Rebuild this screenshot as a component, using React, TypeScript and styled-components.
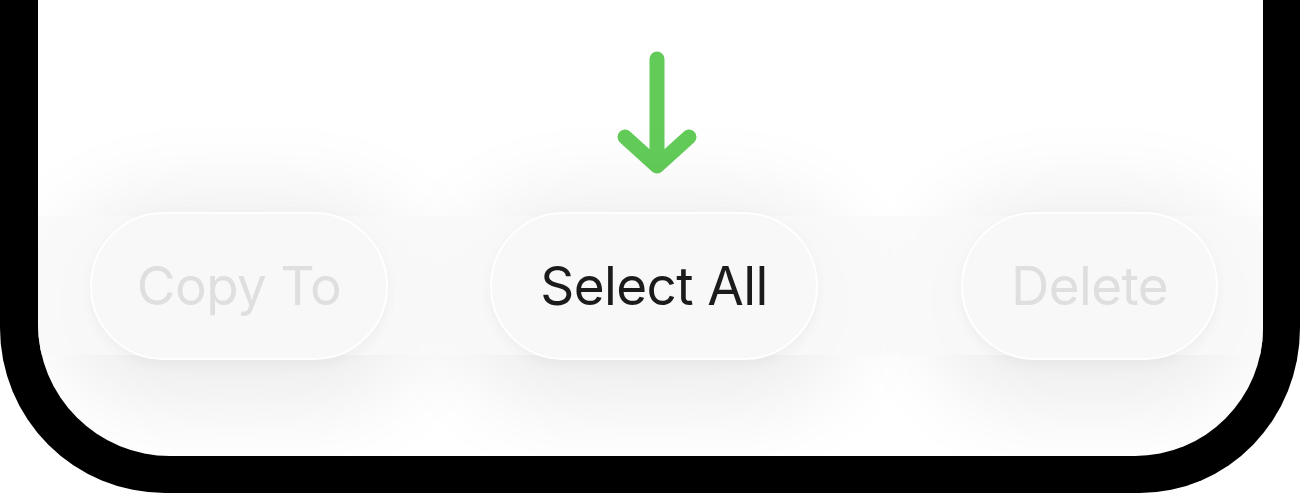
import React from "react";
import styled, { createGlobalStyle } from "styled-components";

const GlobalStyle = createGlobalStyle`
  html, body {
    margin: 0;
    padding: 0;
    background: #ffffff;
  }
  body {
    font-family: Inter, "Liberation Sans", Arial, sans-serif;
    -webkit-font-smoothing: antialiased;
  }
`;

const Device = styled.div`
  width: 1300px;
  height: 493px;
  box-sizing: border-box;
  padding: 0 37px 37px 38px;
  background: #000000;
  border-bottom-left-radius: 165px 165px;
  border-bottom-right-radius: 160px 165px;
  overflow: hidden;
`;

const Screen = styled.div`
  height: 456px;
  background: #ffffff;
  border-bottom-left-radius: 132px;
  border-bottom-right-radius: 128px;
  overflow: hidden;
  display: flex;
  flex-direction: column;
  padding-top: 50px;
  box-sizing: border-box;
`;

const ArrowWrap = styled.div`
  align-self: center;
  margin-left: 13px;
  width: 80px;
  height: 128px;
  color: #63cc59;
`;

const Toolbar = styled.div`
  position: relative;
  z-index: 0;
  display: flex;
  align-items: center;
  height: 148px;
  margin-top: 34px;
  padding-left: 52px;

  &::before {
    content: "";
    position: absolute;
    left: 0;
    right: 0;
    top: 4px;
    bottom: 5px;
    z-index: 1;
    background: rgba(249, 249, 249, 0.8);
  }
`;

const Slot = styled.div<{ $offset: number }>`
  position: relative;
  margin-left: ${({ $offset }) => $offset}px;
  height: 148px;
`;

const Glow = styled.div`
  position: absolute;
  left: 0;
  right: 0;
  top: 6px;
  bottom: 6px;
  z-index: 0;
  border-radius: 999px;
  box-shadow: 0 16px 90px 34px rgba(0, 0, 0, 0.08);
`;

const ActionButton = styled.button<{ $enabled?: boolean; $width: number }>`
  position: relative;
  z-index: 2;
  width: ${({ $width }) => $width}px;
  height: 148px;
  padding: 0;
  box-sizing: border-box;
  border: 2px solid #ffffff;
  border-radius: 74px;
  background: #f8f8f8;
  font-family: Inter, "Liberation Sans", Arial, sans-serif;
  font-size: 53px;
  font-weight: 400;
  letter-spacing: -0.6px;
  color: ${({ $enabled }) => ($enabled ? "#1b1b1b" : "#dfdfdf")};
  white-space: nowrap;
  cursor: ${({ $enabled }) => ($enabled ? "pointer" : "default")};
  box-shadow: 0 4px 14px rgba(0, 0, 0, 0.04);
`;

const DownArrow = () => (
  <svg width="80" height="128" viewBox="0 0 80 128" fill="none">
    <path
      d="M40 9 V114 M8 87 L40 116 L72 87"
      stroke="currentColor"
      strokeWidth="15"
      strokeLinecap="round"
      strokeLinejoin="round"
    />
  </svg>
);

const actions = [
  { label: "Copy To", offset: 0, width: 298, enabled: false },
  { label: "Select All", offset: 102, width: 328, enabled: true },
  { label: "Delete", offset: 143, width: 257, enabled: false },
];

const App: React.FC = () => {
  return (
    <>
      <GlobalStyle />
      <Device>
        <Screen>
          <ArrowWrap>
            <DownArrow />
          </ArrowWrap>
          <Toolbar>
            {actions.map((a) => (
              <Slot key={a.label} $offset={a.offset}>
                <Glow />
                <ActionButton $enabled={a.enabled} $width={a.width}>
                  {a.label}
                </ActionButton>
              </Slot>
            ))}
          </Toolbar>
        </Screen>
      </Device>
    </>
  );
};

export default App;
